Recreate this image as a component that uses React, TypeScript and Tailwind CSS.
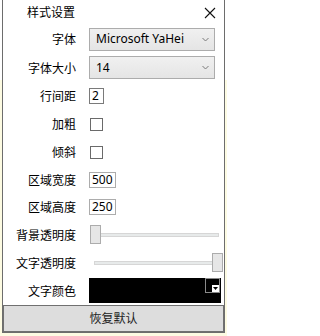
import React from "react";

const FONT = "font-[family-name:'Noto_Sans','Noto_Sans_CJK_SC',sans-serif]";

function Label({ children }: { children: React.ReactNode }) {
  return (
    <div className="w-[73px] shrink-0 text-right text-[12px] leading-[14px] text-black pt-[2px]">
      {children}
    </div>
  );
}

function Chevron() {
  return (
    <svg width="7" height="5" viewBox="0 0 7 5" className="shrink-0">
      <path d="M0.5 1 L3.5 4 L6.5 1" fill="none" stroke="#7a7a7a" strokeWidth="1" />
    </svg>
  );
}

function Select({ value, width }: { value: string; width: string }) {
  return (
    <div
      className={`ml-[13px] h-[23px] ${width} border border-[#acacac] bg-[linear-gradient(#f0f0f0,#e5e5e5)] flex items-center justify-between pl-[6px] pr-[5px] text-[12px] text-black`}
    >
      <span>{value}</span>
      <Chevron />
    </div>
  );
}

function Check() {
  return <div className="ml-[14px] w-[13px] h-[13px] border border-[#6a6a6a] bg-white" />;
}

function TextBox({ value, width, border }: { value: string; width: string; border: string }) {
  return (
    <div
      className={`ml-[13px] h-[16px] ${width} border ${border} bg-white flex items-center pl-[2px] text-[12px] leading-[14px] text-black`}
    >
      {value}
    </div>
  );
}

function Slider({ right }: { right?: boolean }) {
  return (
    <div className="ml-[13px] relative w-[135px] h-[19px]">
      <div className="absolute left-[5px] right-[5px] top-[8px] h-[4px] bg-[#e7eaea] border border-[#d6d6d6]" />
      <div
        className={`absolute top-0 w-[11px] h-[19px] bg-[#e6e6e6] border border-[#acacac] ${
          right ? "right-[1px]" : "left-[1px]"
        }`}
      />
    </div>
  );
}

export default function App() {
  return (
    <div
      className={`w-[227px] h-[336px] overflow-hidden bg-[linear-gradient(to_bottom,#ffffff_80px,#fdfbe2_80px)] ${FONT}`}
    >
      <div className="flex h-[333px]">
        <div className="w-[2px] shrink-0" />
        <div className="w-[223px] h-[333px] bg-white border-l border-r border-b border-[#6d6d6d] flex flex-col">
          <div className="h-[25px] flex items-center justify-between pl-[24px] pr-[8px]">
            <span className="text-[12px] leading-[14px] text-black pt-[1px]">样式设置</span>
            <svg width="12" height="12" viewBox="0 0 12 12">
              <path d="M1 1 L11 11 M11 1 L1 11" stroke="#111" strokeWidth="1.1" fill="none" />
            </svg>
          </div>

          <div className="h-[28px] flex items-center">
            <Label>字体</Label>
            <Select value="Microsoft YaHei" width="w-[126px]" />
          </div>
          <div className="h-[29px] flex items-center">
            <Label>字体大小</Label>
            <Select value="14" width="w-[126px]" />
          </div>
          <div className="h-[28px] flex items-center">
            <Label>行间距</Label>
            <TextBox value="2" width="w-[15px]" border="border-[#7a7a7a]" />
          </div>
          <div className="h-[28px] flex items-center">
            <Label>加粗</Label>
            <Check />
          </div>
          <div className="h-[28px] flex items-center">
            <Label>倾斜</Label>
            <Check />
          </div>
          <div className="h-[27px] flex items-center">
            <Label>区域宽度</Label>
            <TextBox value="500" width="w-[27px]" border="border-[#acacac]" />
          </div>
          <div className="h-[27px] flex items-center">
            <Label>区域高度</Label>
            <TextBox value="250" width="w-[27px]" border="border-[#acacac]" />
          </div>
          <div className="h-[29px] flex items-center">
            <Label>背景透明度</Label>
            <Slider />
          </div>
          <div className="h-[27px] flex items-center">
            <Label>文字透明度</Label>
            <Slider right />
          </div>
          <div className="h-[29px] flex items-center">
            <Label>文字颜色</Label>
            <div className="ml-[13px] w-[132px] h-[25px] bg-black flex justify-end items-start pr-[1px]">
              <div className="w-[15px] h-[15px] border border-[#8a8a8a] flex items-end justify-end">
                <div className="w-[7px] h-[7px] bg-white flex items-center justify-center">
                  <svg width="5" height="3" viewBox="0 0 5 3">
                    <path d="M0 0 L5 0 L2.5 3 Z" fill="#000" />
                  </svg>
                </div>
              </div>
            </div>
          </div>

          <div className="h-[27px] bg-[#dddddd] border border-[#707070] flex items-center justify-center text-[12px] leading-[14px] text-[#222]">
            恢复默认
          </div>
        </div>
        <div className="w-[2px] shrink-0" />
      </div>
    </div>
  );
}
